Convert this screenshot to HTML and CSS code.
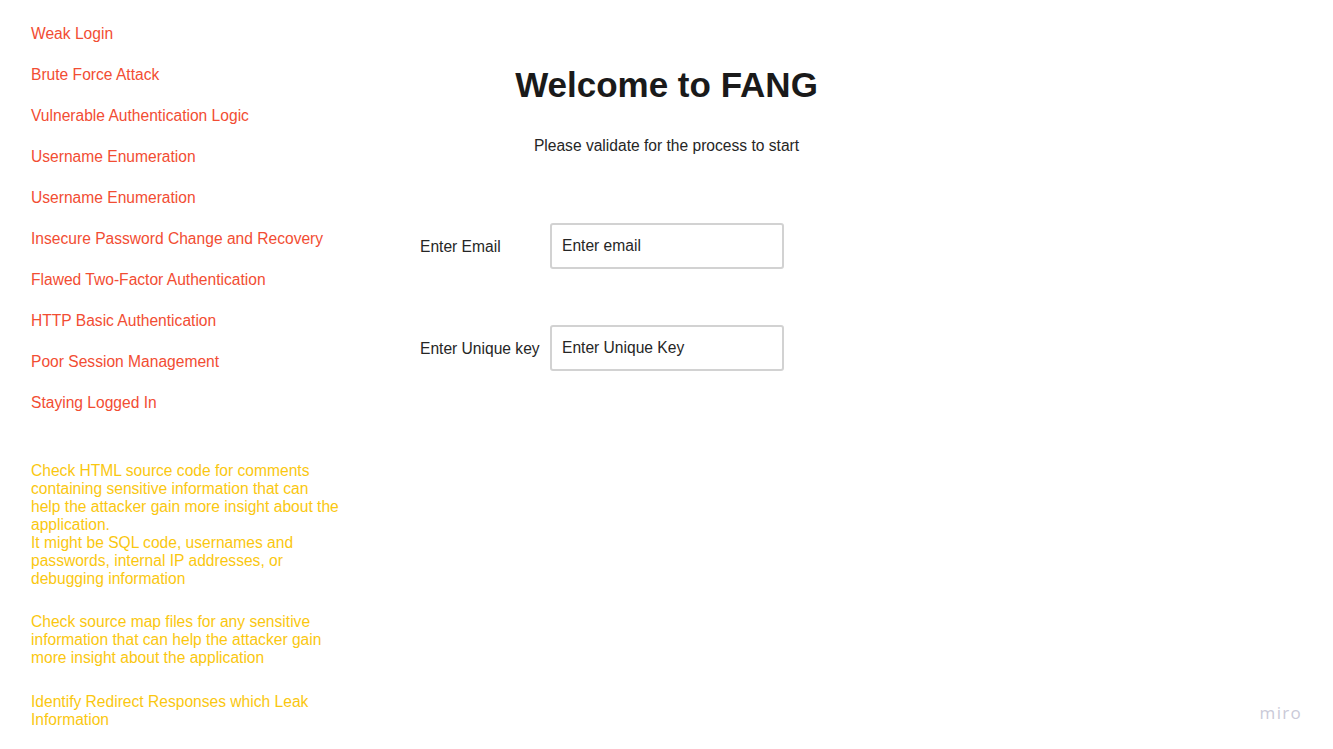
FILE: index.html
```html
<!DOCTYPE html>
<html>
<head>
<meta charset="utf-8">
<link rel="stylesheet" href="styles.css">
</head>
<body>
<div class="page">
  <aside class="sidebar">
    <ul class="links">
      <li>Weak Login</li>
      <li>Brute Force Attack</li>
      <li>Vulnerable Authentication Logic</li>
      <li>Username Enumeration</li>
      <li>Username Enumeration</li>
      <li>Insecure Password Change and Recovery</li>
      <li>Flawed Two-Factor Authentication</li>
      <li>HTTP Basic Authentication</li>
      <li>Poor Session Management</li>
      <li>Staying Logged In</li>
    </ul>
    <div class="notes">
      <p>Check HTML source code for comments containing sensitive information that can help the attacker gain more insight about the application.<br>It might be SQL code, usernames and passwords, internal IP addresses, or debugging information</p>
      <p>Check source map files for any sensitive information that can help the attacker gain more insight about the application</p>
      <p>Identify Redirect Responses which Leak Information</p>
    </div>
  </aside>
  <main class="main">
    <h1 class="title">Welcome to FANG</h1>
    <p class="subtitle">Please validate for the process to start</p>
    <form class="form">
      <div class="row">
        <label class="label">Enter Email</label>
        <input class="field" type="text" placeholder="Enter email">
      </div>
      <div class="row">
        <label class="label">Enter Unique key</label>
        <input class="field" type="text" placeholder="Enter Unique Key">
      </div>
    </form>
  </main>
  <div class="spacer"></div>
</div>
<div class="miro">miro</div>
</body>
</html>
```
FILE: styles.css
```css
html, body {
  margin: 0;
  padding: 0;
  background: #ffffff;
}
body {
  font-family: "Liberation Sans", Arial, sans-serif;
  font-size: 15.6px;
  line-height: 18px;
  color: #262626;
  width: 1333px;
  height: 749px;
  overflow: hidden;
  position: relative;
}
.page {
  display: grid;
  grid-template-columns: 400px 533px 400px;
}
.sidebar {
  padding: 25px 0 0 31px;
}
.links {
  list-style: none;
  margin: 0;
  padding: 0;
  color: #f24d33;
}
.links li {
  height: 18px;
  margin-bottom: 23px;
  white-space: nowrap;
}
.links li:last-child {
  margin-bottom: 0;
}
.notes {
  margin-top: 50px;
  width: 310px;
  color: #fac710;
}
.notes p {
  margin: 0 0 26px 0;
}
.notes p:first-child {
  margin-bottom: 25px;
}
.main {
  padding-top: 65px;
}
.title {
  margin: 0;
  font-size: 35px;
  line-height: 40px;
  font-weight: bold;
  text-align: center;
  color: #1a1a1a;
}
.subtitle {
  margin: 32px 0 0 0;
  text-align: center;
}
.form {
  margin-top: 68px;
  padding-left: 20px;
  display: flex;
  flex-direction: column;
  gap: 56px;
}
.row {
  display: flex;
  align-items: center;
}
.label {
  width: 130px;
  padding-top: 2px;
}
.field {
  box-sizing: border-box;
  width: 234px;
  height: 46px;
  border: 2px solid #d2d2d2;
  border-radius: 3px;
  padding: 0 0 0 10px;
  font-family: "Liberation Sans", Arial, sans-serif;
  font-size: 15.6px;
  color: #262626;
  outline: none;
}
.field::placeholder {
  color: #262626;
  opacity: 1;
}
.miro {
  position: absolute;
  right: 31px;
  bottom: 26px;
  font-family: "Open Sans", sans-serif;
  font-size: 17px;
  letter-spacing: 1.3px;
  color: #cacad8;
  line-height: 20px;
}
```
